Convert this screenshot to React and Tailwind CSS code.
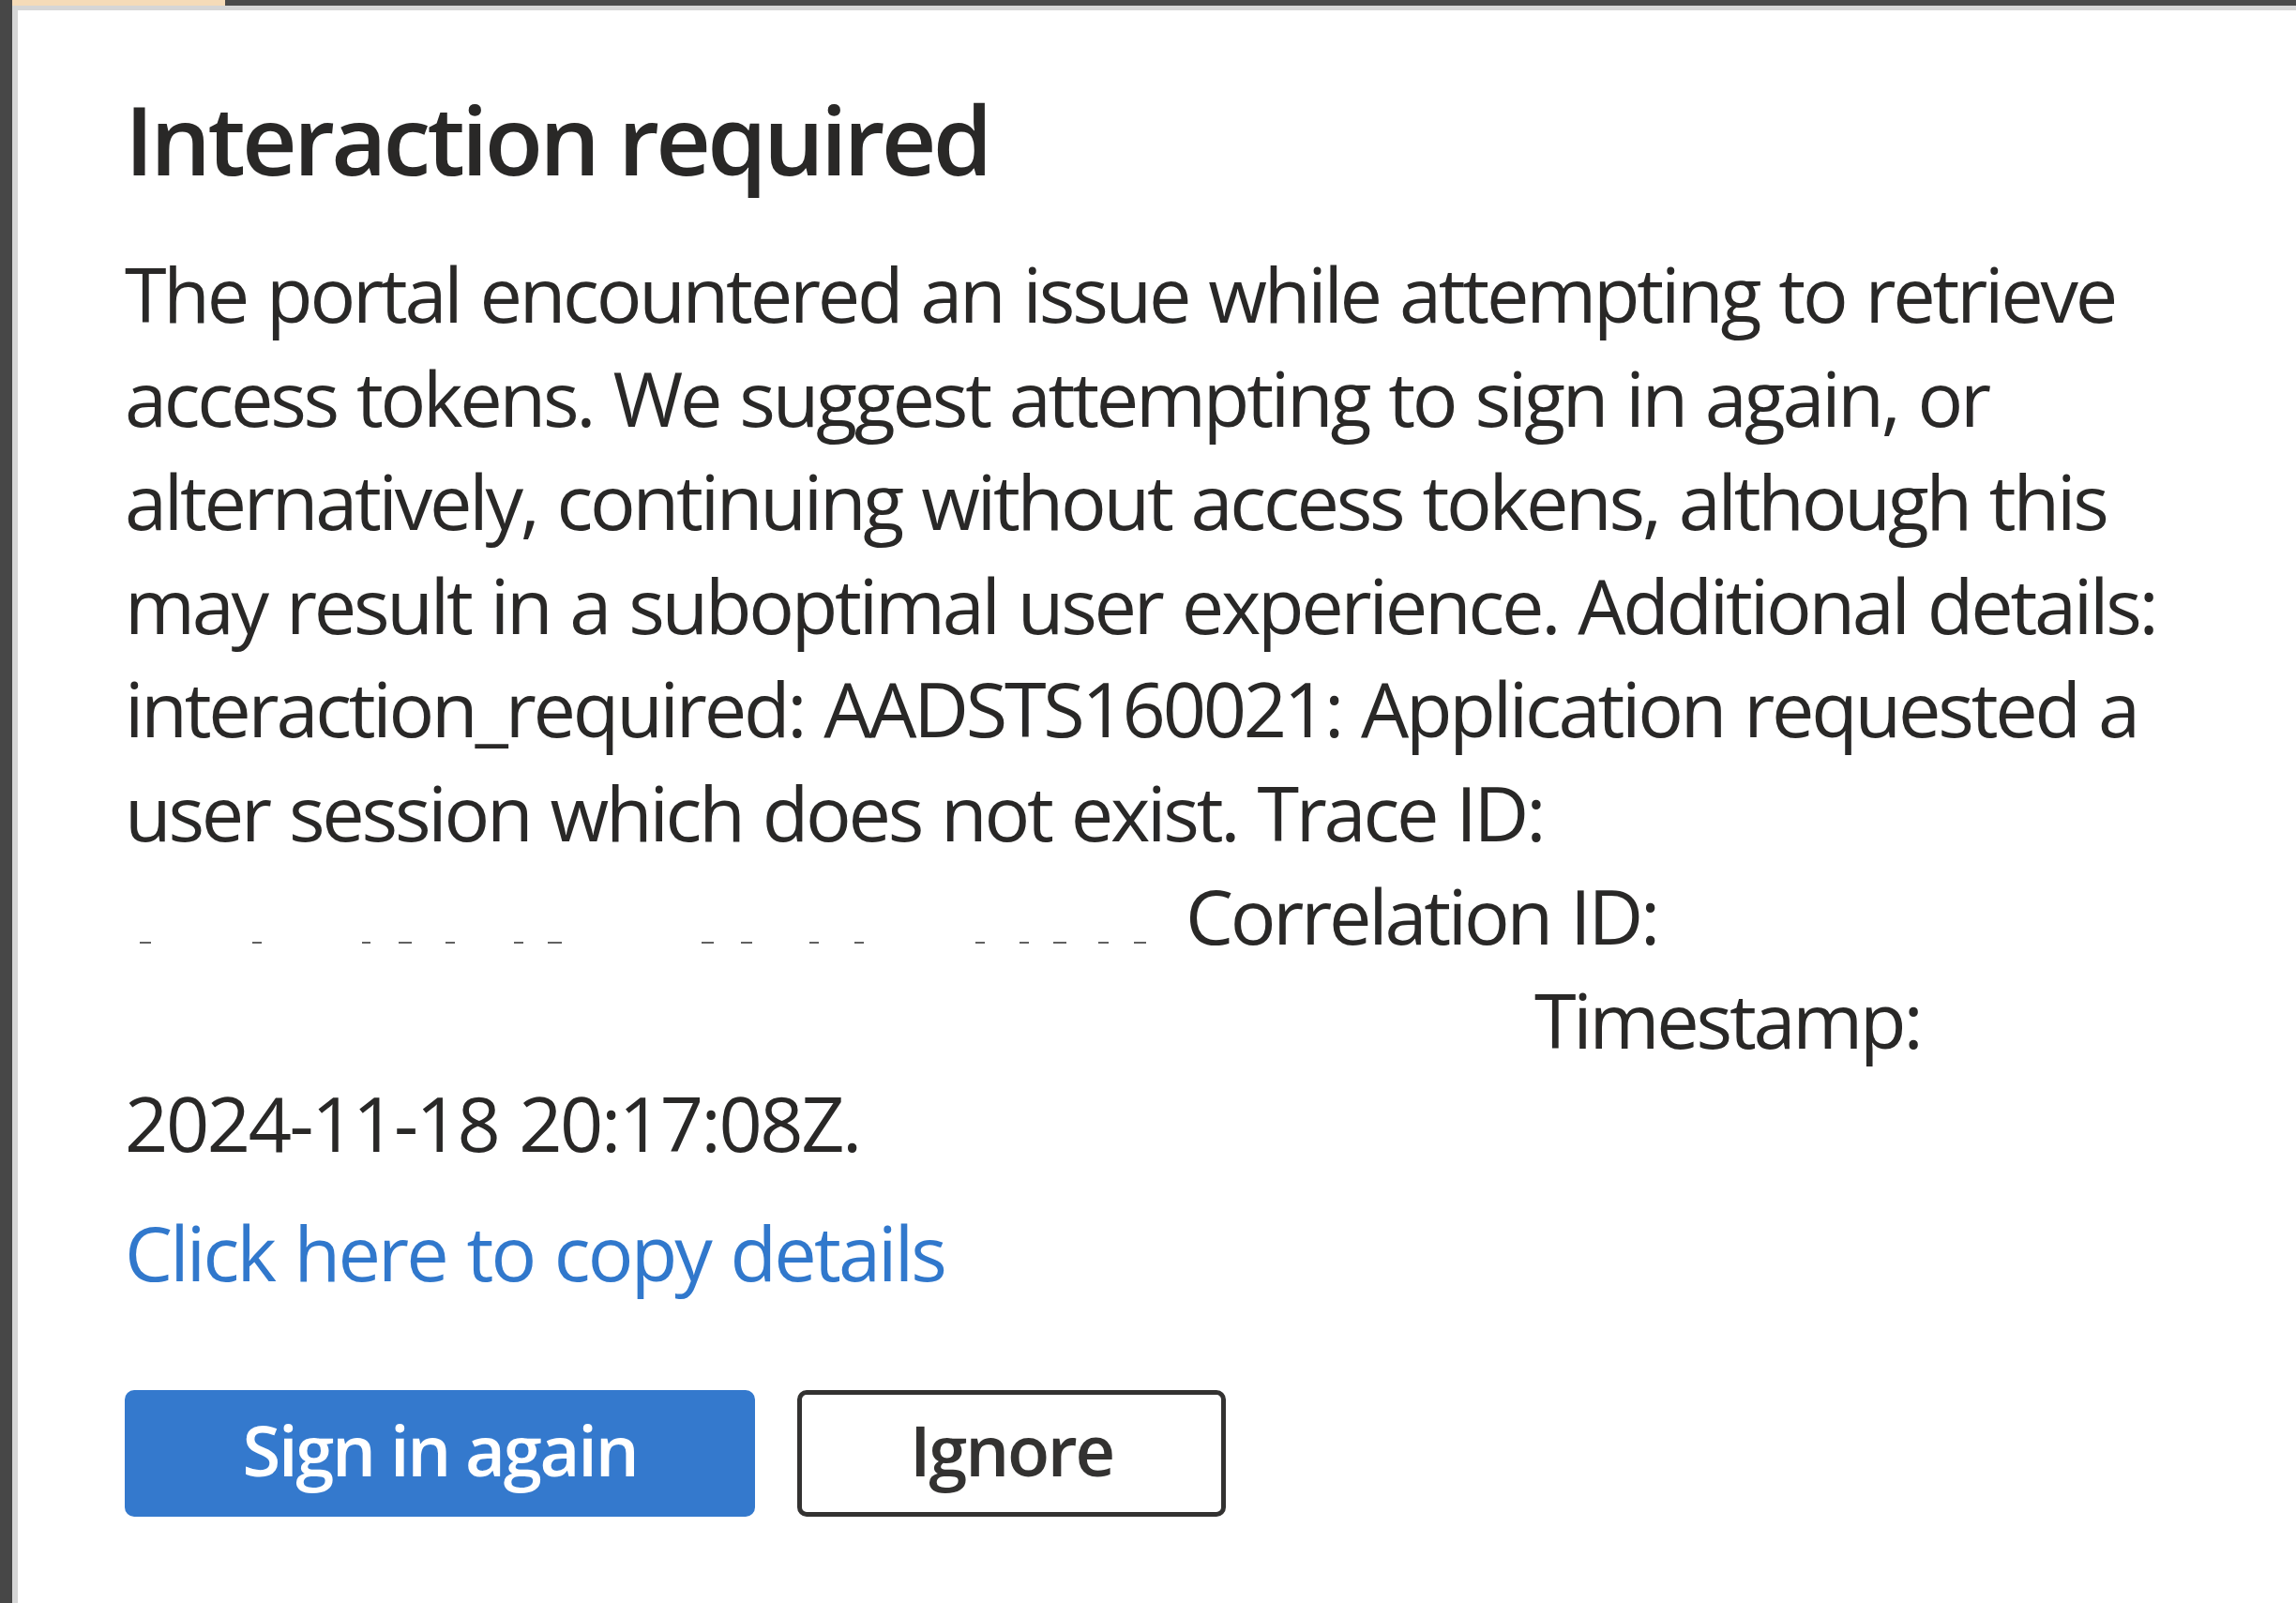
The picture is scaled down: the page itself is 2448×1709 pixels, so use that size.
import React from 'react';

const dashes = [
  [149, 161], [269, 279], [386, 395], [425, 439], [475, 485], [548, 558], [584, 599],
  [748, 761], [790, 802], [863, 873], [911, 921], [1040, 1050], [1087, 1097],
  [1123, 1137], [1171, 1182], [1209, 1222],
];

// leftover marks of the redacted id, drawn from x=133
const Redacted = () => (
  <svg width="1131" height="3" className="shrink-0">
    {dashes.map(([a, b]) => (
      <rect key={a} x={a - 133} y="0" width={b - a} height="2" fill="#3a3a3a" opacity="0.8" />
    ))}
  </svg>
);

const App = () => {
  return (
    <div
      className="flex min-h-[1709px] w-full bg-[#474747] text-[#292827]"
      style={{ fontFamily: '"Open Sans", "Noto Sans", sans-serif' }}
    >
      <div className="w-[13px] shrink-0" />
      <div className="flex flex-1 flex-col">
        <div className="flex h-[6px]">
          <div className="w-[227px] bg-[#f5dbb8]" />
          <div className="flex-1 bg-[#4a4a4a]" />
        </div>
        <div className="flex-1 border-l-[6px] border-t-[5px] border-[#d6d6d6] bg-white pl-[114px] pt-[76px]">
          <h1 className="whitespace-nowrap text-[102px] font-semibold leading-[1.2] tracking-[-0.037em]">
            Interaction required
          </h1>

          <div className="mt-[49px] whitespace-nowrap text-[81px] leading-[110.5px] tracking-[-0.04em] [word-spacing:0.04em]">
            <div>The portal encountered an issue while attempting to retrieve</div>
            <div>access tokens. We suggest attempting to sign in again, or</div>
            <div>alternatively, continuing without access tokens, although this</div>
            <div>may result in a suboptimal user experience. Additional details:</div>
            <div>interaction_required: AADSTS160021: Application requested a</div>
            <div>user session which does not exist. Trace ID:</div>
            <div className="flex items-baseline">
              <Redacted />
              <span>Correlation ID:</span>
            </div>
            <div className="pl-[1503px]">Timestamp:</div>
            <div className="tracking-[-0.03em]">2024-11-18 20:17:08Z.</div>
          </div>

          <div className="mt-[27px] whitespace-nowrap text-[81px] leading-[110.5px] tracking-[-0.035em] [word-spacing:0.04em]">
            <a className="cursor-pointer text-[#3178cc]">Click here to copy details</a>
          </div>

          <div className="mt-[92px] flex gap-[45px]">
            <button className="flex h-[135px] w-[672px] items-center justify-center rounded-[10px] bg-[#3479cd] pb-[8px] text-[74px] font-semibold tracking-[-0.03em] text-white">
              Sign in again
            </button>
            <button className="flex h-[135px] w-[457px] items-center justify-center rounded-[10px] border-[5px] border-[#333231] bg-white pb-[8px] text-[74px] font-semibold tracking-[-0.03em] text-[#333231]">
              Ignore
            </button>
          </div>
        </div>
      </div>
    </div>
  );
};

export default App;
